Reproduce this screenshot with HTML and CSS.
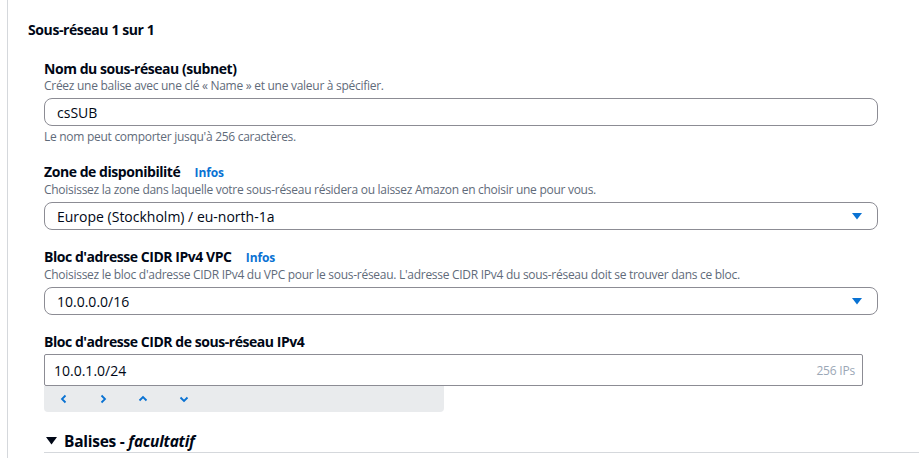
FILE: index.html
```html
<!DOCTYPE html>
<html lang="fr">
<head>
<meta charset="utf-8">
<title>Sous-réseau</title>
<link rel="stylesheet" href="styles.css">
</head>
<body>
<div class="panel">
  <h2 class="section-title">Sous-réseau 1 sur 1</h2>
  <div class="fields">
    <div class="field">
      <div class="label">Nom du sous-réseau (subnet)</div>
      <div class="desc">Créez une balise avec une clé « Name » et une valeur à spécifier.</div>
      <div class="input">csSUB</div>
      <div class="constraint">Le nom peut comporter jusqu'à 256 caractères.</div>
    </div>
    <div class="field">
      <div class="label">Zone de disponibilité <a class="info">Infos</a></div>
      <div class="desc">Choisissez la zone dans laquelle votre sous-réseau résidera ou laissez Amazon en choisir une pour vous.</div>
      <div class="select"><span>Europe (Stockholm) / eu-north-1a</span><svg class="caret" width="10" height="7" viewBox="0 0 10 7"><polygon points="0,0 10,0 5,6.5" fill="#0972d3"/></svg></div>
    </div>
    <div class="field">
      <div class="label">Bloc d'adresse CIDR IPv4 VPC <a class="info">Infos</a></div>
      <div class="desc">Choisissez le bloc d'adresse CIDR IPv4 du VPC pour le sous-réseau. L'adresse CIDR IPv4 du sous-réseau doit se trouver dans ce bloc.</div>
      <div class="select"><span>10.0.0.0/16</span><svg class="caret" width="10" height="7" viewBox="0 0 10 7"><polygon points="0,0 10,0 5,6.5" fill="#0972d3"/></svg></div>
    </div>
    <div class="field">
      <div class="label">Bloc d'adresse CIDR de sous-réseau IPv4</div>
      <div class="cidr">
        <div class="cidr-input"><span>10.0.1.0/24</span><span class="count">256 IPs</span></div>
        <div class="stepper">
          <svg width="8" height="10" viewBox="0 0 8 10"><polyline points="5.5,1.5 2,5 5.5,8.5" fill="none" stroke="#0972d3" stroke-width="1.8"/></svg>
          <svg width="8" height="10" viewBox="0 0 8 10"><polyline points="2.5,1.5 6,5 2.5,8.5" fill="none" stroke="#0972d3" stroke-width="1.8"/></svg>
          <svg width="10" height="8" viewBox="0 0 10 8"><polyline points="1.5,5.5 5,2 8.5,5.5" fill="none" stroke="#0972d3" stroke-width="1.8"/></svg>
          <svg width="10" height="8" viewBox="0 0 10 8"><polyline points="1.5,2.5 5,6 8.5,2.5" fill="none" stroke="#0972d3" stroke-width="1.8"/></svg>
        </div>
      </div>
    </div>
    <div class="tags">
      <svg class="tri" width="11" height="8" viewBox="0 0 11 8"><polygon points="0,0 11,0 5.5,7.5" fill="#000716"/></svg>
      <span>Balises - <em>facultatif</em></span>
    </div>
  </div>
</div>
</body>
</html>
```
FILE: styles.css
```css
* { box-sizing: border-box; }
html, body { margin: 0; padding: 0; background: #fff; }
body {
  font-family: "Open Sans", "Noto Sans", sans-serif;
  color: #000716;
  height: 458px;
  overflow: hidden;
}
.panel {
  margin-left: 7px;
  border-left: 1px solid #d5d8dc;
  min-height: 458px;
  padding: 21px 0 0 20px;
}
.section-title {
  margin: 0;
  font-size: 14px;
  line-height: 18px;
  font-weight: 700;
  letter-spacing: -0.4px;
}
.fields {
  padding: 21px 41px 0 16px;
  display: flex;
  flex-direction: column;
  gap: 18px;
}
.field { display: flex; flex-direction: column; }
.label {
  font-size: 14px;
  line-height: 18px;
  font-weight: 700;
  letter-spacing: -0.45px;
}
.info {
  color: #0972d3;
  font-size: 12px;
  font-weight: 700;
  margin-left: 11px;
  letter-spacing: -0.1px;
}
.desc, .constraint {
  font-size: 12px;
  line-height: 16px;
  color: #5f6b7a;
  letter-spacing: -0.28px;
}
.desc { margin-bottom: 4px; }
.constraint { margin-top: 3px; }
.input, .select {
  height: 28px;
  border: 1px solid #8c8c94;
  border-radius: 8px;
  padding: 0 12px;
  font-size: 14px;
  display: flex;
  align-items: center;
  justify-content: space-between;
}
.caret { margin-right: 3px; }
.cidr { margin-top: 3px; }
.cidr-input {
  width: 819px;
  height: 32px;
  border: 1px solid #8c8c94;
  border-radius: 2px;
  padding: 0 7px 0 9px;
  font-size: 14px;
  display: flex;
  align-items: center;
  justify-content: space-between;
}
.count { font-size: 12px; color: #9ba7b6; letter-spacing: -0.2px; }
.stepper {
  width: 400px;
  height: 26px;
  background: #e9ebed;
  border-radius: 0 0 4px 4px;
  display: flex;
  align-items: center;
  gap: 31px;
  padding-left: 16px;
}
.tags {
  margin-top: 0;
  margin-right: -41px;
  display: flex;
  align-items: center;
  gap: 7px;
  padding: 1px 0 1px 2px;
  border-bottom: 1px solid #d5d8dc;
  font-size: 15.5px;
  line-height: 20px;
  font-weight: 700;
  letter-spacing: -0.25px;
}
.tags em { font-style: italic; }
```
